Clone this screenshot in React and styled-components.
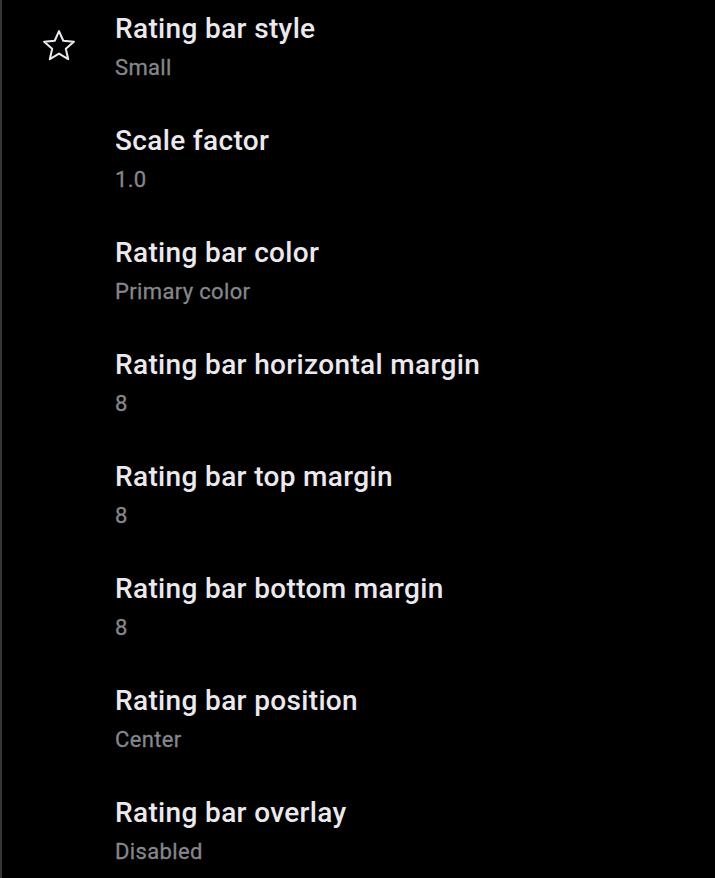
import React from 'react';
import styled, { createGlobalStyle } from 'styled-components';

const GlobalStyle = createGlobalStyle`
  html, body {
    margin: 0;
    padding: 0;
    background: #000;
    overflow: hidden;
  }
  body {
    font-family: Roboto, "Noto Sans", sans-serif;
  }
`;

const Screen = styled.div`
  width: 715px;
  height: 878px;
  box-sizing: border-box;
  border-left: 2px solid #363636;
  background: #000;
  overflow: hidden;
`;

const List = styled.div`
  display: flex;
  flex-direction: column;
  margin-top: -10px;
`;

const Row = styled.div`
  display: flex;
  align-items: center;
  height: 112px;
  padding-left: 38px;
`;

const IconSlot = styled.div`
  width: 38px;
  height: 38px;
  margin-right: 37px;
  display: flex;
  align-items: center;
  justify-content: center;
  color: #ebe9ee;
`;

const Texts = styled.div`
  display: flex;
  flex-direction: column;
`;

const Title = styled.div`
  font-size: 28px;
  line-height: 36px;
  font-weight: 500;
  color: #ebe9ee;
  letter-spacing: 0.35px;
`;

const Summary = styled.div`
  margin-top: 6px;
  margin-bottom: -2px;
  font-size: 22px;
  line-height: 30px;
  font-weight: 400;
  color: #86878c;
  letter-spacing: 0.35px;
  -webkit-text-stroke: 0.3px #86878c;
`;

// outline star, sharp points, thin stroke
const StarIcon = () => (
  <svg width="38" height="38" viewBox="0 0 24 24" fill="none" stroke="currentColor" strokeWidth="1.3" strokeLinejoin="round">
    <polygon points="12,2.6 14.7,8.7 21.4,9.3 16.3,13.7 17.8,20.3 12,16.8 6.2,20.3 7.7,13.7 2.6,9.3 9.3,8.7" />
  </svg>
);

const prefs = [
  { title: 'Rating bar style', summary: 'Small', icon: true },
  { title: 'Scale factor', summary: '1.0' },
  { title: 'Rating bar color', summary: 'Primary color' },
  { title: 'Rating bar horizontal margin', summary: '8' },
  { title: 'Rating bar top margin', summary: '8' },
  { title: 'Rating bar bottom margin', summary: '8' },
  { title: 'Rating bar position', summary: 'Center' },
  { title: 'Rating bar overlay', summary: 'Disabled' },
];

export default function App() {
  return (
    <>
      <GlobalStyle />
      <Screen>
        <List>
          {prefs.map((p) => (
            <Row key={p.title}>
              <IconSlot>{p.icon ? <StarIcon /> : null}</IconSlot>
              <Texts>
                <Title>{p.title}</Title>
                <Summary>{p.summary}</Summary>
              </Texts>
            </Row>
          ))}
        </List>
      </Screen>
    </>
  );
}
